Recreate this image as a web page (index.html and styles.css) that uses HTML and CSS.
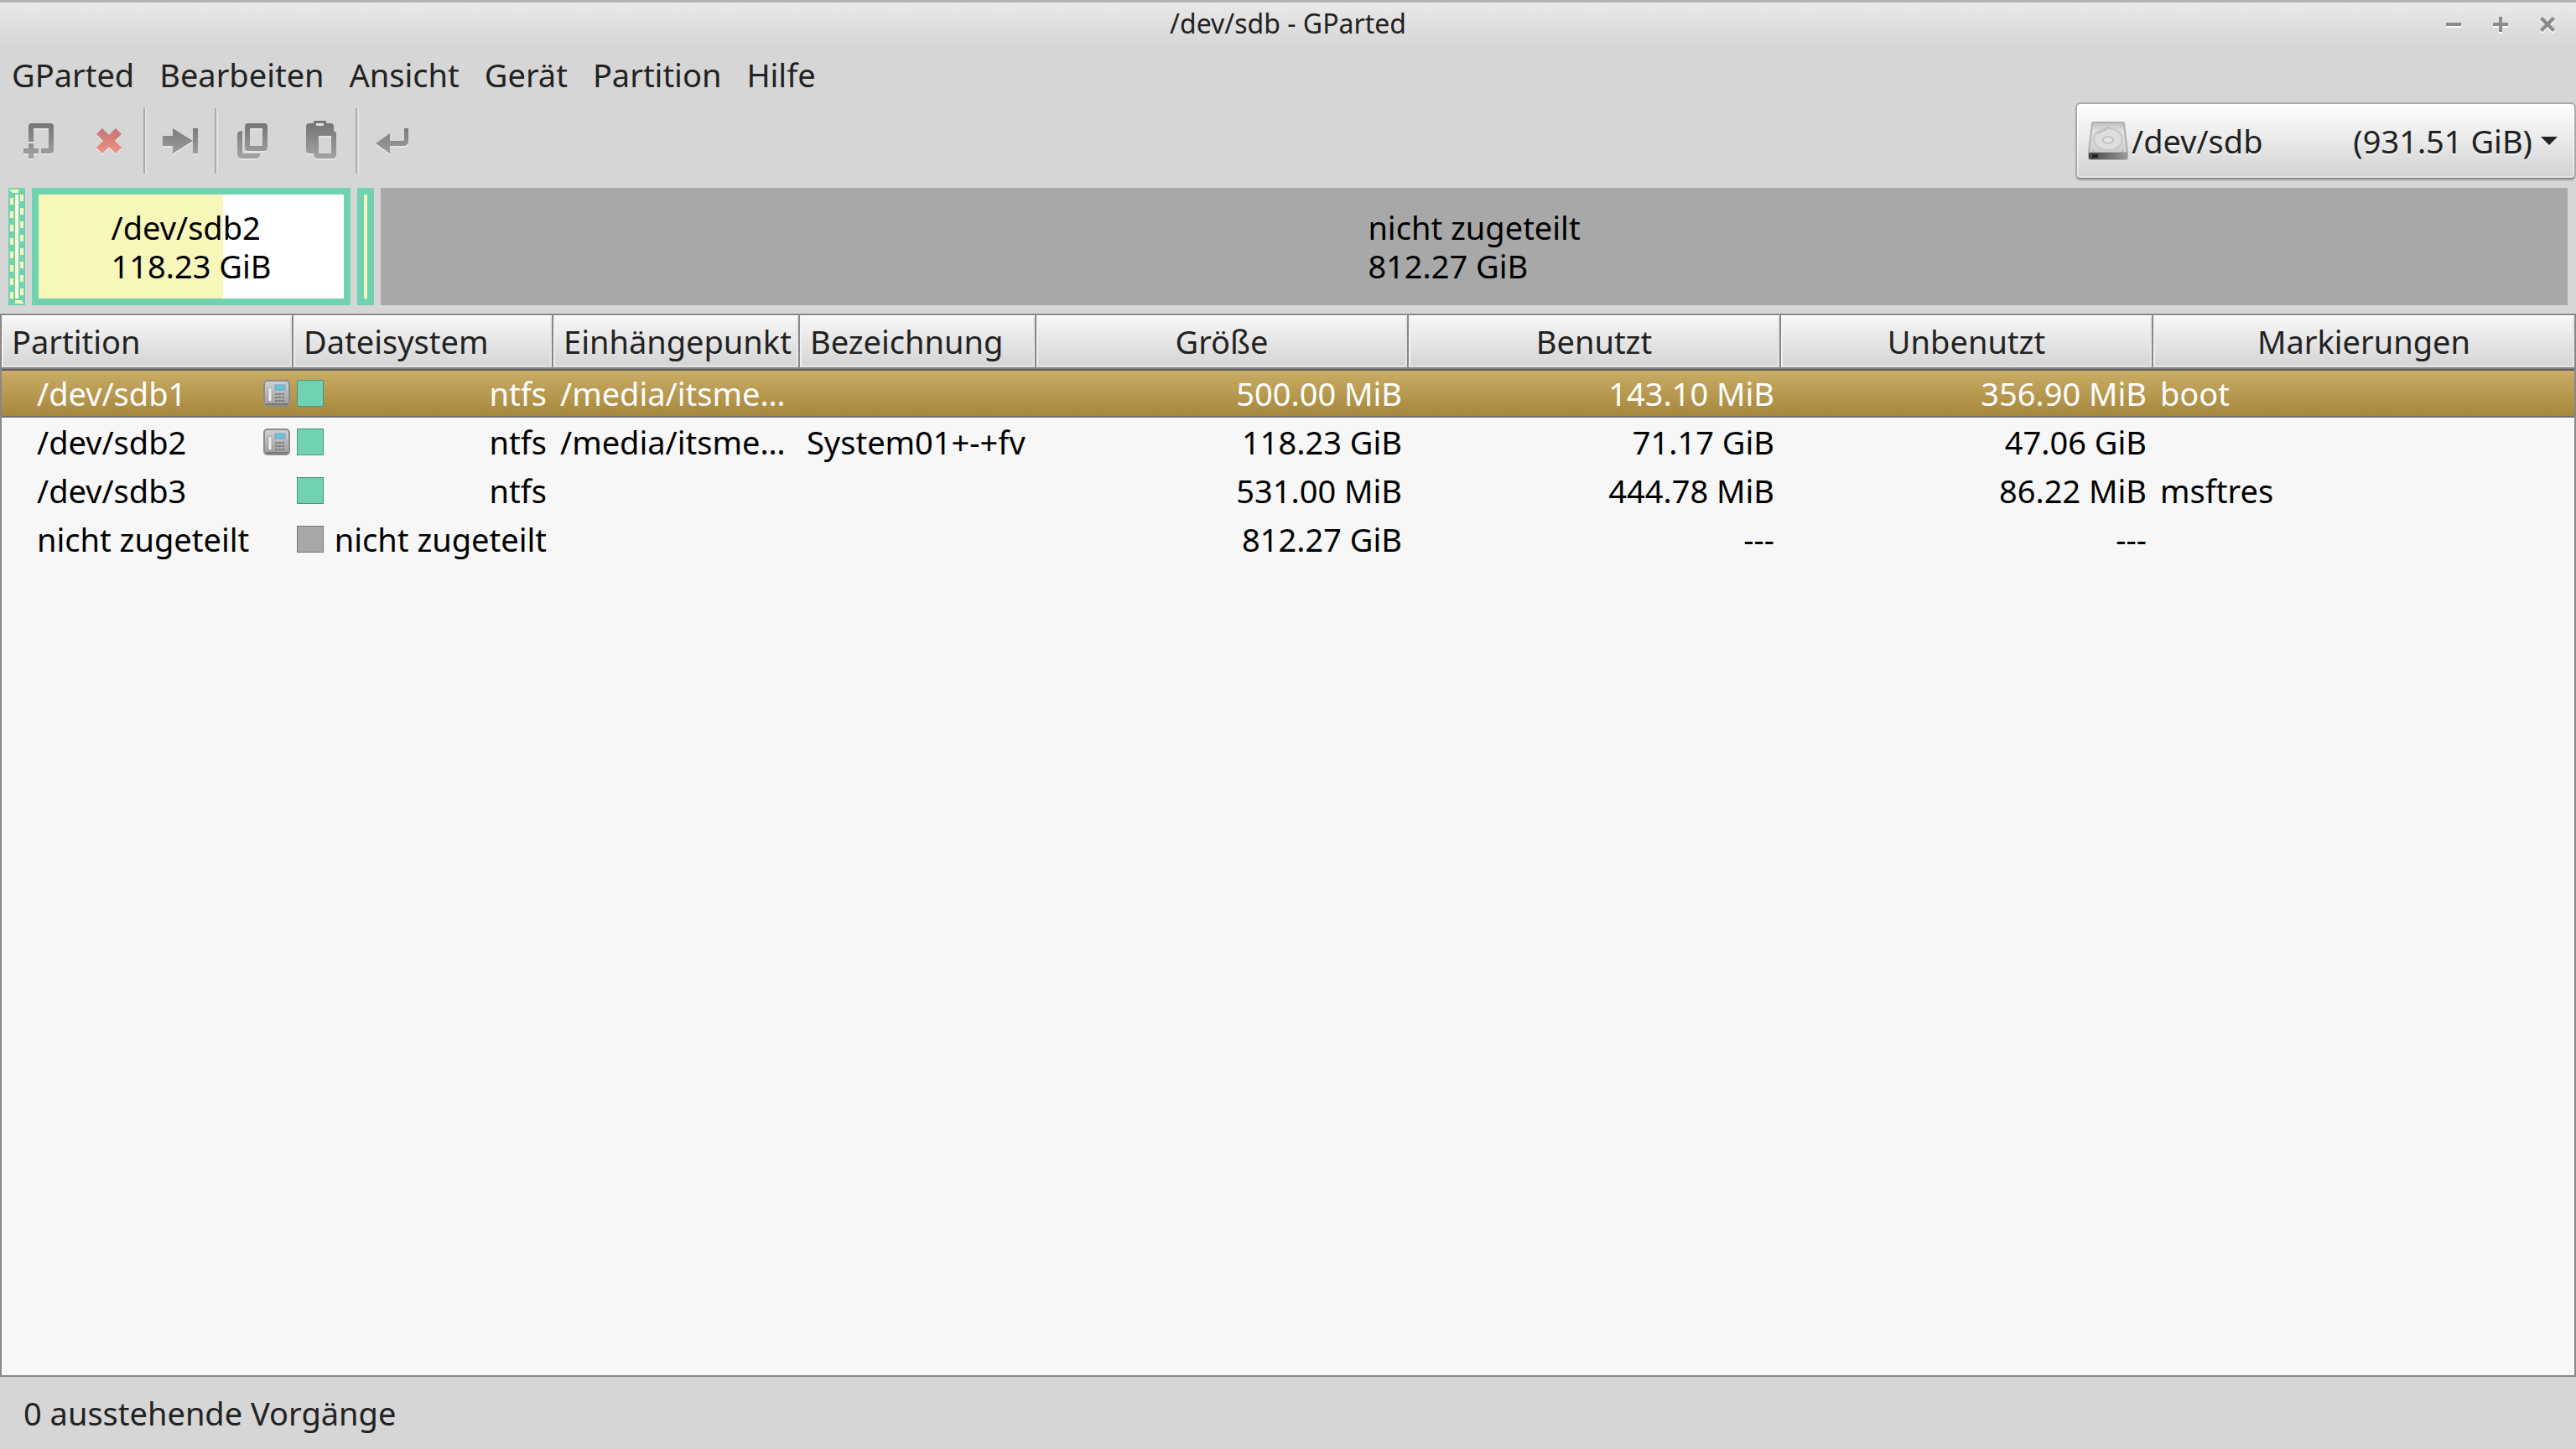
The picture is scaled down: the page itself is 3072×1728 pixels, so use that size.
FILE: index.html
```html
<!DOCTYPE html>
<html lang="de">
<head>
<meta charset="utf-8">
<title>/dev/sdb - GParted</title>
<link rel="stylesheet" href="styles.css">
</head>
<body>
<svg class="defs" aria-hidden="true">
  <defs>
    <linearGradient id="grey" gradientUnits="userSpaceOnUse" x1="0" y1="2" x2="0" y2="46">
      <stop offset="0" stop-color="#747474"/><stop offset="1" stop-color="#a4a4a4"/>
    </linearGradient>
    <linearGradient id="red" gradientUnits="userSpaceOnUse" x1="0" y1="8" x2="0" y2="40">
      <stop offset="0" stop-color="#c07474"/><stop offset="1" stop-color="#f29486"/>
    </linearGradient>
    <linearGradient id="plate" x1="0" y1="0" x2="0" y2="1">
      <stop offset="0" stop-color="#c4c4c4"/><stop offset=".3" stop-color="#e4e4e4"/><stop offset="1" stop-color="#cfcfcf"/>
    </linearGradient>
    <linearGradient id="front" x1="0" y1="0" x2="1" y2="0">
      <stop offset="0" stop-color="#444"/><stop offset="1" stop-color="#999"/>
    </linearGradient>
    <linearGradient id="safe" x1="0" y1="0" x2="0" y2="1">
      <stop offset="0" stop-color="#d2d2d2"/><stop offset="1" stop-color="#9c9c9c"/>
    </linearGradient>
    <symbol id="mounted" viewBox="0 0 32 32">
      <rect x="1" y="1" width="30" height="30" rx="4" fill="url(#safe)" stroke="#8c8c8c" stroke-width="2"/>
      <path d="M3 29h26" stroke="#777" stroke-width="2"/>
      <rect x="6" y="9" width="4" height="17" rx="2" fill="#f0f0f0" stroke="#a4a4a4"/>
      <rect x="14" y="6" width="12" height="6" fill="#6cc0dc" stroke="#6ba8bc"/>
      <path d="M14 16h3v2h-3zm4 0h3v2h-3zm4 0h3v2h-3zm-8 4h3v2h-3zm4 0h3v2h-3zm4 0h3v2h-3zm-8 4h3v2h-3zm4 0h3v2h-3zm4 0h3v2h-3z" fill="#7c7c7c"/>
    </symbol>
  </defs>
</svg>
<div class="window">
  <header class="titlebar">
    <h1 class="title">/dev/sdb - GParted</h1>
    <div class="controls">
      <button class="control" aria-label="Minimieren"><svg width="18" height="20" viewBox="0 0 18 20"><path d="M0 7h18v4H0z"/></svg></button>
      <button class="control" aria-label="Maximieren"><svg width="18" height="20" viewBox="0 0 18 20"><path d="M0 7h7V0h4v7h7v4h-7v7H7v-7H0z"/></svg></button>
      <button class="control" aria-label="Schließen"><svg width="18" height="20" viewBox="0 0 18 20"><path d="M3 0l6 6 6-6 3 3-6 6 6 6-3 3-6-6-6 6-3-3 6-6-6-6z"/></svg></button>
    </div>
  </header>
  <nav class="menubar">
    <button class="menu">GParted</button>
    <button class="menu">Bearbeiten</button>
    <button class="menu">Ansicht</button>
    <button class="menu">Gerät</button>
    <button class="menu">Partition</button>
    <button class="menu">Hilfe</button>
  </nav>
  <div class="toolbar">
    <button class="tool" aria-label="Neu"><svg class="icon" viewBox="0 0 48 48"><path fill="url(#grey)" d="M11 25V7q0-4 4-4h22q4 0 4 4v28q0 4-4 4H26v-6h9V9H17v16zM11 27h6v6h6v6h-6v6h-6v-6H5v-6h6z"/></svg></button>
    <button class="tool" aria-label="Löschen"><svg class="icon" viewBox="0 0 48 48"><path fill="url(#red)" d="M16 9l8 8 8-8 7 7-8 8 8 8-7 7-8-8-8 8-7-7 8-8-8-8z"/></svg></button>
    <span class="divider"></span>
    <button class="tool" aria-label="Größe ändern"><svg class="icon" viewBox="0 0 48 48"><path fill="url(#grey)" d="M3 18h12V9l24 15-24 15v-9H3zM39 9h6v30h-6z"/></svg></button>
    <span class="divider"></span>
    <button class="tool" aria-label="Kopieren"><svg class="icon" viewBox="0 0 48 48"><path fill="url(#grey)" fill-rule="evenodd" d="M20 3h19q4 0 4 4v25q0 4-4 4H20q-4 0-4-4V7q0-4 4-4zm2 6v21h15V9zM7 16q0-4 6-4v27h21q0 6-5 6H12q-5 0-5-5z"/></svg></button>
    <button class="tool" aria-label="Einfügen"><svg class="icon" viewBox="0 0 48 48"><path fill="url(#grey)" fill-rule="evenodd" d="M15 0h15v3h5q4 0 4 4v5q3 1 3 4v24q0 5-4 5H20q-4 0-5-6h-5q-4 0-4-4V7q0-4 4-4h5zm3 3v3h9V3zm3 15v21h15V18z"/></svg></button>
    <span class="divider"></span>
    <button class="tool" aria-label="Anwenden"><svg class="icon" viewBox="0 0 48 48"><path fill="url(#grey)" d="M4 27l17-12v9h16q1 0 1-2V9h5v15q0 6-6 6H21v9z"/></svg></button>
    <button class="device">
      <svg width="48" height="48" viewBox="0 0 48 48">
        <path d="M7 1h34q3 0 3 3l4 33v7q0 3-3 3H3q-3 0-3-3v-7L4 4q0-3 3-3z" fill="#b0b0b0"/>
        <path d="M8 3h32q2 0 2 2l4 32H2L6 5q0-2 2-2z" fill="url(#plate)"/>
        <ellipse cx="24" cy="22" rx="17" ry="13" fill="#dedede" stroke="#c6c6c6" stroke-width="2"/>
        <ellipse cx="24" cy="23" rx="6" ry="4" fill="#e4e4e4" stroke="#c4c4c4" stroke-width="2"/>
        <path d="M8 15q12-1 18-9" fill="none" stroke="#c0c0c0" stroke-width="2"/>
        <path d="M6 36h1M41 36h1M9 6h1M38 6h1" stroke="#aaa" stroke-width="2"/>
        <rect x="1" y="38" width="46" height="8" rx="2" fill="url(#front)"/>
        <rect x="5" y="40" width="7" height="4" fill="#222"/>
      </svg>
      <span class="device-name">/dev/sdb</span>
      <span>(931.51 GiB)</span>
      <svg class="arrow" width="20" height="12" viewBox="0 0 20 12"><path d="M0 1h20L10 11z" fill="#222"/></svg>
    </button>
  </div>
  <section class="disk" aria-label="Partitionen von /dev/sdb">
    <div class="part selected">
      <svg width="20" height="140" viewBox="0 0 20 140">
        <path d="M8 8h2v124H8z" fill="#f8f7ba"/><path d="M10 8h2v124h-2z" fill="#fff"/>
        <path d="M4 12v120M16 8v124" fill="none" stroke="#f8f7ba" stroke-width="4" stroke-dasharray="8 8"/>
        <path d="M2 2h10v4H4V4H2zM8 134h8v2h2v2H8z" fill="#f8f7ba"/>
      </svg>
    </div>
    <div class="part sdb2"><div class="used"></div><p class="label">/dev/sdb2<br>118.23 GiB</p></div>
    <div class="part sdb3"></div>
    <div class="part free"><p class="label">nicht zugeteilt<br>812.27 GiB</p></div>
  </section>
  <main class="list">
    <table class="table">
      <colgroup><col class="c-part"><col class="c-fs"><col class="c-mount"><col class="c-label"><col class="c-size"><col class="c-size"><col class="c-size"><col></colgroup>
      <thead>
        <tr><th>Partition</th><th>Dateisystem</th><th>Einhängepunkt</th><th>Bezeichnung</th><th class="mid">Größe</th><th class="mid">Benutzt</th><th class="mid">Unbenutzt</th><th class="mid">Markierungen</th></tr>
      </thead>
      <tbody>
        <tr class="active"><td><div class="name"><span>/dev/sdb1</span><svg width="32" height="32"><use href="#mounted"/></svg></div></td><td><div class="fs"><i class="swatch"></i>ntfs</div></td><td>/media/itsme…</td><td></td><td class="num">500.00 MiB</td><td class="num">143.10 MiB</td><td class="num">356.90 MiB</td><td>boot</td></tr>
        <tr><td><div class="name"><span>/dev/sdb2</span><svg width="32" height="32"><use href="#mounted"/></svg></div></td><td><div class="fs"><i class="swatch"></i>ntfs</div></td><td>/media/itsme…</td><td>System01+-+fv</td><td class="num">118.23 GiB</td><td class="num">71.17 GiB</td><td class="num">47.06 GiB</td><td></td></tr>
        <tr><td><div class="name"><span>/dev/sdb3</span></div></td><td><div class="fs"><i class="swatch"></i>ntfs</div></td><td></td><td></td><td class="num">531.00 MiB</td><td class="num">444.78 MiB</td><td class="num">86.22 MiB</td><td>msftres</td></tr>
        <tr><td><div class="name"><span>nicht zugeteilt</span></div></td><td><div class="fs"><i class="swatch none"></i>nicht zugeteilt</div></td><td></td><td></td><td class="num">812.27 GiB</td><td class="num">---</td><td class="num">---</td><td></td></tr>
      </tbody>
    </table>
  </main>
  <footer class="status">0 ausstehende Vorgänge</footer>
</div>
</body>
</html>
```
FILE: styles.css
```css
* { box-sizing: border-box; }

body {
  margin: 0;
  background: #d6d6d6;
  color: #222;
  font: 400 38px/46px "Noto Sans", "Open Sans", sans-serif;
}

button {
  padding: 0;
  border: 0;
  background: none;
  color: inherit;
  font: inherit;
  white-space: nowrap;
}

svg { display: block; flex: none; }
.defs { position: absolute; width: 0; height: 0; }

.window {
  display: flex;
  flex-direction: column;
  min-height: 100vh;
}

/* Title bar */
.titlebar {
  display: grid;
  grid-template-columns: 1fr auto 1fr;
  align-items: center;
  height: 56px;
  border-top: 3px solid #b4b4b4;
  background: linear-gradient(#e9e9e9, #d6d6d6);
}
.title {
  grid-column: 2;
  margin: 0;
  padding-bottom: 4px;
  font-size: 32px;
  line-height: 46px;
  font-weight: 400;
}
.controls {
  display: flex;
  justify-content: flex-end;
  gap: 38px;
  padding-right: 25px;
}
.control svg { fill: #8a8a8a; filter: drop-shadow(0 2px 0 #fafafa); }

/* Menus */
.menubar { display: flex; gap: 30px; padding: 10px 14px 0; height: 66px; }
.menu { height: 46px; padding: 0; }

/* Toolbar */
.toolbar {
  display: flex;
  align-items: center;
  height: 92px;
  padding-left: 5px;
}
.tool { display: grid; place-items: center; width: 83px; height: 84px; }
.icon { width: 48px; height: 48px; filter: drop-shadow(0 2px 0 #e4e4e4); }
.divider { width: 2px; height: 78px; background: #aaa; box-shadow: 2px 0 #e2e2e2; }
.device {
  display: flex;
  align-items: center;
  width: 597px;
  height: 92px;
  margin-left: auto;
  padding: 0 20px 0 13px;
  border: 2px solid #aaa;
  border-bottom-color: #888;
  border-radius: 6px;
  background: linear-gradient(#fff, #d2d2d2);
  box-shadow: inset 0 0 0 2px #ffffff66, 0 2px #c0c0c0;
  text-shadow: 0 2px #f4f4f4;
}
.device-name { margin: 0 auto 0 4px; }
.arrow { margin-left: 10px; }

/* Disk map */
.disk { display: flex; gap: 8px; height: 150px; padding: 10px 10px 0; }
.part {
  display: flex;
  position: relative;
  justify-content: center;
  align-items: center;
  border: 8px solid #70d2b1;
  background: #fff;
  color: #000;
}
.part.selected { width: 20px; border: 0; background: #70d2b1; }
.sdb2 { width: 380px; }
.sdb3 { width: 20px; background: #f8f7ba; }
.free { flex: 1; border: 0; background: #a8a8a8; }
.used { position: absolute; inset: 0 auto 0 0; width: 220px; background: #f8f7ba; }
.label { position: relative; margin: 0; }

/* Partition list */
.list {
  flex: 1;
  margin-top: 10px;
  border: 2px solid #888;
  background: #f7f7f7;
  color: #000;
}
.table { width: 100%; border-collapse: separate; border-spacing: 0; table-layout: fixed; }
.c-part { width: 348px; }
.c-fs { width: 310px; }
.c-mount { width: 294px; }
.c-label { width: 282px; }
.c-size { width: 444px; }
th {
  height: 64px;
  padding: 0 0 0 12px;
  border-right: 2px solid #888;
  border-bottom: 2px solid #888;
  background: linear-gradient(#f8f8f8, #d4d4d4);
  box-shadow: inset 0 2px #fff, inset 2px 0 #f0f0f0, inset -2px -2px #e4e4e4;
  color: #222;
  font-weight: 400;
  text-align: left;
  white-space: nowrap;
}
th.mid { padding: 0; text-align: center; }
th:last-child { border-right: 0; }
td { height: 58px; padding: 0 8px; white-space: nowrap; }
td:first-child { padding: 0 4px 0 42px; }
td:nth-child(2) { padding-left: 4px; }
.num { text-align: right; }
.name, .fs { display: flex; align-items: center; justify-content: space-between; }
.swatch { width: 32px; height: 32px; border: 1px solid #4e937c; background: #70d2b1; }
.swatch.none { border-color: #767676; background: #a8a8a8; }
.active td {
  border-top: 2px solid #5f5c5c;
  border-bottom: 2px solid #707070;
  background: linear-gradient(#c9ac66, #a6873b);
  color: #fff;
}

.status { height: 86px; padding: 20px 28px 0; }
```
